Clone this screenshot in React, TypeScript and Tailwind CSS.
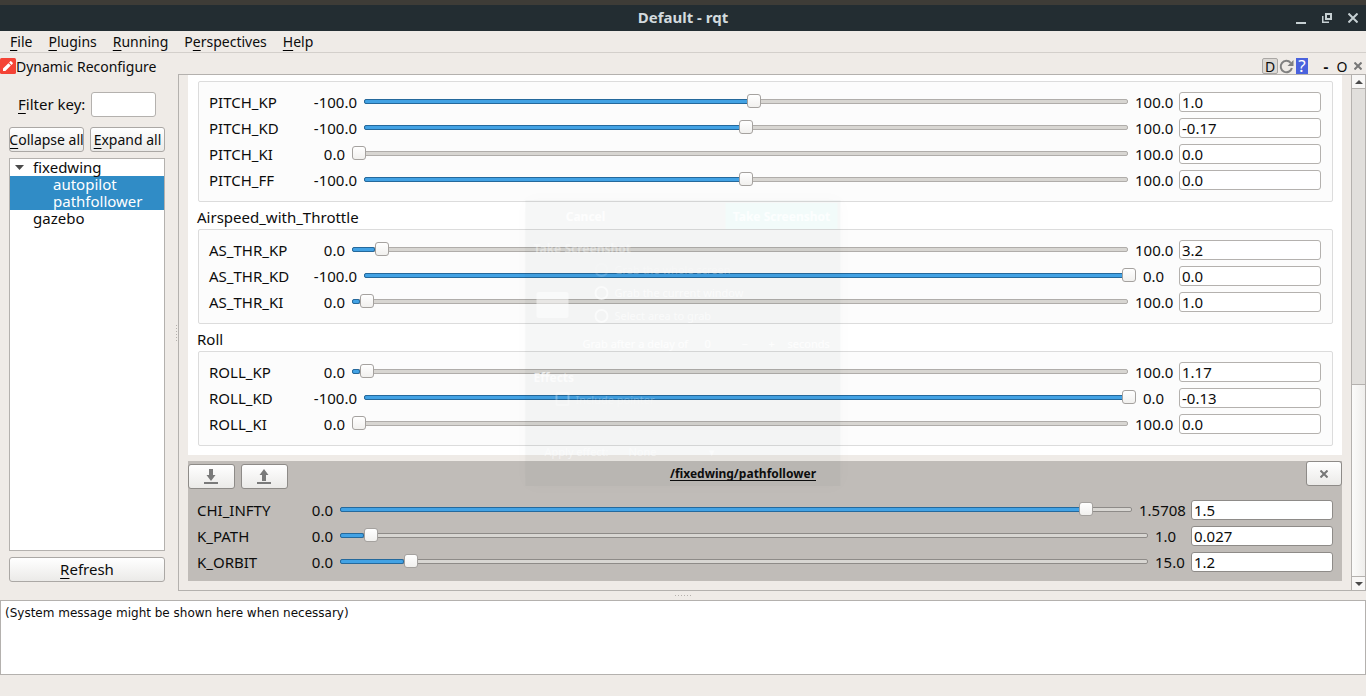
import React from "react";

type Param = { name: string; min: string; max: string; value: string; pos: number };

const pitch: Param[] = [
  { name: "PITCH_KP", min: "-100.0", max: "100.0", value: "1.0", pos: 51 },
  { name: "PITCH_KD", min: "-100.0", max: "100.0", value: "-0.17", pos: 50 },
  { name: "PITCH_KI", min: "0.0", max: "100.0", value: "0.0", pos: 0 },
  { name: "PITCH_FF", min: "-100.0", max: "100.0", value: "0.0", pos: 50 },
];
const airspeed: Param[] = [
  { name: "AS_THR_KP", min: "0.0", max: "100.0", value: "3.2", pos: 3 },
  { name: "AS_THR_KD", min: "-100.0", max: "0.0", value: "0.0", pos: 100 },
  { name: "AS_THR_KI", min: "0.0", max: "100.0", value: "1.0", pos: 1 },
];
const roll: Param[] = [
  { name: "ROLL_KP", min: "0.0", max: "100.0", value: "1.17", pos: 1 },
  { name: "ROLL_KD", min: "-100.0", max: "0.0", value: "-0.13", pos: 100 },
  { name: "ROLL_KI", min: "0.0", max: "100.0", value: "0.0", pos: 0 },
];
const follower: Param[] = [
  { name: "CHI_INFTY", min: "0.0", max: "1.5708", value: "1.5", pos: 95 },
  { name: "K_PATH", min: "0.0", max: "1.0", value: "0.027", pos: 3 },
  { name: "K_ORBIT", min: "0.0", max: "15.0", value: "1.2", pos: 8 },
];

function Slider({ label, pos, dark }: { label: string; pos: number; dark?: boolean }) {
  return (
    <div className="relative flex h-5 min-w-0 flex-1 items-center pb-px">
      <div
        className={
          "h-[5px] w-full rounded-[2px] border bg-[#d8d6d2] " +
          (dark ? "border-[#8e8b88]" : "border-[#b0adaa]")
        }
      >
        <div
          className="-mt-px -ml-px h-[5px] rounded-[2px] border border-[#25699c] bg-[#42a2e4]"
          style={{ width: pos + "%" }}
        />
      </div>
      <input
        type="range"
        aria-label={label + " slider"}
        min={0}
        max={100}
        step="any"
        defaultValue={pos}
        className="absolute inset-x-0 top-0 h-[18px] w-full appearance-none bg-transparent [&::-webkit-slider-thumb]:size-3.5 [&::-webkit-slider-thumb]:appearance-none [&::-webkit-slider-thumb]:rounded-[3px] [&::-webkit-slider-thumb]:border [&::-webkit-slider-thumb]:border-[#a5a29f] [&::-webkit-slider-thumb]:bg-linear-to-b [&::-webkit-slider-thumb]:from-white [&::-webkit-slider-thumb]:to-[#f1f0ee]"
      />
    </div>
  );
}

function ParamRow({ p, dark }: { p: Param; dark?: boolean }) {
  const minW = p.min.length > 4 ? "w-[42px]" : "w-[30px]";
  const maxW = p.max.length > 5 ? "w-[45px]" : p.max.length > 4 ? "w-[37px]" : "w-[29px]";
  return (
    <div className="flex h-5 items-center">
      <label htmlFor={p.name} className="w-[106px] shrink-0">
        {p.name}
      </label>
      <span className={"mr-[7px] flex shrink-0 justify-end whitespace-nowrap " + minW}>{p.min}</span>
      <Slider label={p.name} pos={p.pos} dark={dark} />
      <span className={"mr-[7px] ml-[7px] shrink-0 whitespace-nowrap " + maxW}>{p.max}</span>
      <input
        id={p.name}
        type="text"
        defaultValue={p.value}
        className={
          "h-5 w-[142px] shrink-0 rounded-[3px] border bg-white px-0.5 " +
          (dark ? "border-[#8e8b88]" : "border-[#b4b1ae]")
        }
      />
    </div>
  );
}

function Group({ params }: { params: Param[] }) {
  return (
    <div className="ml-px flex flex-col gap-1.5 rounded-[2px] border border-[#dcdcdc] bg-[#fcfcfc] pt-2.5 pr-[11px] pb-[11px] pl-[10px]">
      {params.map((p) => (
        <ParamRow key={p.name} p={p} />
      ))}
    </div>
  );
}

function Key({ children }: { children: React.ReactNode }) {
  return (
    <span className="underline decoration-black decoration-1 underline-offset-3 [text-decoration-skip-ink:none]">
      {children}
    </span>
  );
}

const buttonLook =
  "rounded-[3px] border border-[#aba8a5] bg-linear-to-b from-white to-[#ebeae8]";
const darkButtonLook =
  "rounded-[3px] border border-[#8e8b88] bg-linear-to-b from-white to-[#ebeae8]";

function FadingDialog() {
  return (
    <div
      aria-hidden="true"
      className="pointer-events-none absolute top-[200px] left-1/2 flex h-[286px] w-[315px] -translate-x-1/2 flex-col bg-[#203030]/4 font-['Noto_Sans',sans-serif] text-[11px] text-white/50 shadow-[0_0_16px_rgba(0,0,0,0.02)]"
    >
      <div className="flex h-8 items-center justify-between pr-[3px] pl-1 text-[12px] font-bold text-white/80">
        <button tabIndex={-1} className="h-[26px] w-[112px]">
          Cancel
        </button>
        <button tabIndex={-1} className="h-[26px] w-[112px] bg-[#f2fbfa]">
          Take Screenshot
        </button>
      </div>
      <div className="mt-2 ml-2 h-5 text-[12px] font-bold text-white/40">Take Screenshot</div>
      <div className="-mt-0.5 ml-[11px] flex h-[69px] items-center">
        <div className="mt-6 h-[26px] w-8 rounded-[2px] bg-white/50" />
        <div className="ml-[26px] flex flex-col">
          {["Grab the whole screen", "Grab the current window", "Select area to grab"].map((t, i) => (
            <label
              key={t}
              className={"flex h-[23px] items-center gap-1.5 " + (i === 0 ? "text-white/30" : "text-white/60")}
            >
              <input
                type="radio"
                tabIndex={-1}
                name="grab"
                className={
                  "size-3.5 appearance-none rounded-full border-2 " +
                  (i === 0 ? "border-white/15" : "border-white/60")
                }
              />
              {t}
            </label>
          ))}
        </div>
      </div>
      <div className="mt-1.5 ml-[57px] flex h-5 items-center text-white/80">
        <span className="w-[122px]">Grab after a delay of</span>
        <span className="w-[37px]">0</span>
        <span className="w-[27px]">−</span>
        <span className="w-[19px]">+</span>
        <span>seconds</span>
      </div>
      <div className="mt-4 ml-2 h-5 text-[12px] font-bold text-white/70">Effects</div>
      <label className="ml-[30px] flex h-5 items-center gap-1.5 text-white/25">
        <input
          type="checkbox"
          tabIndex={-1}
          className="size-3.5 appearance-none rounded-[2px] border-2 border-white/30"
        />
        Include pointer
      </label>
      <div className="mt-8 ml-[19px] flex h-5 items-center">
        <span className="w-[84px]">Apply effect:</span>
        <span className="w-[80px]">None</span>
        <span>▾</span>
      </div>
    </div>
  );
}

export default function App() {
  return (
    <div className="relative flex min-h-screen flex-col bg-[#efebe7] font-['Noto_Sans',sans-serif] text-[15px] leading-[17px] text-[#0c0c0c]">
      <div className="h-[5px] bg-[#3e3c37]" />
      <header className="flex h-[26px] items-center bg-[#232d32] pb-px text-[#d2dade]">
        <div className="w-20" />
        <h1 className="flex-1 text-center text-[15px] font-bold">Default - rqt</h1>
        <div className="flex w-20 items-center justify-end gap-4 pr-2">
          <button aria-label="Minimize" className="flex h-3 w-2.5 items-end">
            <span className="h-0.5 w-2.5 bg-[#c6d0d3]" />
          </button>
          <button aria-label="Restore">
            <svg width="10" height="10" viewBox="0 0 10 10" fill="none" stroke="#c6d0d3">
              <path d="M4 1h5v5H4z" strokeWidth="2" />
              <path d="M0.75 3v6.25H7" strokeWidth="1.5" />
            </svg>
          </button>
          <button aria-label="Close">
            <svg width="10" height="10" viewBox="0 0 10 10" stroke="#c6d0d3" strokeWidth="2">
              <path d="M0.5 0.5l9 9M9.5 0.5l-9 9" />
            </svg>
          </button>
        </div>
      </header>
      <nav className="flex h-[22px] items-center gap-4 border-b border-[#d3cfcb] pl-2.5 text-[14px] leading-[17px]">
        <button><Key>F</Key>ile</button>
        <button><Key>P</Key>lugins</button>
        <button><Key>R</Key>unning</button>
        <button>P<Key>e</Key>rspectives</button>
        <button><Key>H</Key>elp</button>
      </nav>
      <div className="flex h-[21px] items-center pt-[5px]">
        <svg width="16" height="16" viewBox="0 0 16 16">
          <rect width="16" height="16" rx="1.5" fill="#f44336" />
          <path
            fill="#fff"
            d="M3 10.6V13h2.4l5.4-5.4-2.4-2.4L3 10.6zM12.7 5.7a.7.7 0 0 0 0-.9l-1.5-1.5a.7.7 0 0 0-.9 0L9.1 4.5l2.4 2.4 1.2-1.2z"
          />
        </svg>
        <h2 className="flex-1 text-[14px]">Dynamic Reconfigure</h2>
        <button className="h-4 w-4 rounded-[2px] border border-[#aaa7a4] bg-[#dcd9d5] text-[14px] leading-4">D</button>
        <button aria-label="Reload" className="ml-px">
          <svg width="15" height="15" viewBox="0 0 15 15" fill="none">
            <path d="M11.7 3.8A5.7 5.7 0 1 0 12.9 9" stroke="#808080" strokeWidth="2" />
            <path d="M14.5 1v6h-6z" fill="#808080" />
          </svg>
        </button>
        <button className="ml-0.5 h-4 w-3 bg-[#4a62dd] text-[17px] leading-4 text-white">?</button>
        <button className="ml-[14px] w-2 font-bold">-</button>
        <button className="ml-1.5 w-3 text-[14px]">O</button>
        <button aria-label="Close dock" className="mr-1 ml-1.5">
          <svg width="8" height="8" viewBox="0 0 8 8" stroke="#777" strokeWidth="2">
            <path d="M0.5 0.5l7 7M7.5 0.5l-7 7" />
          </svg>
        </button>
      </div>

      <main className="flex">
        <aside className="flex w-[174px] shrink-0 flex-col px-[9px] pt-[18px] pb-[9px]">
          <div className="flex items-center pl-[9px]">
            <label htmlFor="filter" className="w-[73px] whitespace-nowrap"><Key>F</Key>ilter key:</label>
            <input id="filter" type="text" className="h-[25px] w-[65px] rounded-[3px] border border-[#b4b1ae] bg-white px-1" />
          </div>
          <div className="mt-2.5 flex gap-[6px] text-[14px] leading-[17px]">
            <button className={"flex h-[25px] w-[75px] items-center justify-center overflow-hidden whitespace-nowrap " + buttonLook}>
              <span><Key>C</Key>ollapse all</span>
            </button>
            <button className={"flex h-[25px] w-[75px] items-center justify-center overflow-hidden whitespace-nowrap " + buttonLook}>
              <span><Key>E</Key>xpand all</span>
            </button>
          </div>
          <ul className="mt-1.5 flex-1 border border-[#b4b1ae] bg-white">
            <li className="flex items-center">
              <svg width="9" height="5" viewBox="0 0 9 5" className="mr-[9px] ml-[5px]">
                <path d="M0 0h9L4.5 5z" fill="#4a4a4a" />
              </svg>
              fixedwing
            </li>
            <li className="bg-[#308cc6] pl-[43px] text-white">autopilot</li>
            <li className="bg-[#308cc6] pl-[43px] text-white">pathfollower</li>
            <li className="pl-[23px]">gazebo</li>
          </ul>
          <button className={"mt-1.5 h-[25px] " + buttonLook}><Key>R</Key>efresh</button>
        </aside>
        <div className="flex w-1 shrink-0 flex-col items-center justify-center gap-0.5">
          {[0, 1, 2, 3, 4, 5].map((i) => (
            <span key={i} className="size-px bg-[#b5b1ad]" />
          ))}
        </div>
        <div className="flex min-w-0 flex-1 border border-r-0 border-[#b4b1ae]">
          <div className="flex min-w-0 flex-1 flex-col gap-1.5 pr-[9px] pb-[9px] pl-[9px]">
            <section className="bg-white px-[9px] pt-1.5 pb-[9px]">
              <Group params={pitch} />
              <h3 className="flex h-[27px] items-center pt-1">Airspeed_with_Throttle</h3>
              <Group params={airspeed} />
              <h3 className="flex h-[27px] items-center pt-1">Roll</h3>
              <Group params={roll} />
            </section>
            <section className="bg-[#c0bcb8] pb-[9px]">
              <div className="flex h-[39px] items-start">
                <div className="flex w-[100px] shrink-0 gap-1.5 pt-[3px]">
                  <button aria-label="Load parameters" className={"flex h-[25px] w-[47px] items-center justify-center pr-0.5 " + darkButtonLook}>
                    <svg width="14" height="15" viewBox="0 0 14 15" fill="#7a7a7a">
                      <path d="M5 0h4v6h2.5L7 12 2.5 6H5zM0 13h14v2H0z" />
                    </svg>
                  </button>
                  <button aria-label="Save parameters" className={"flex h-[25px] w-[47px] items-center justify-center pr-0.5 " + darkButtonLook}>
                    <svg width="14" height="15" viewBox="0 0 14 15" fill="#7a7a7a">
                      <path d="M5 12h4V6h2.5L7 0 2.5 6H5zM0 13h14v2H0z" />
                    </svg>
                  </button>
                </div>
                <h3 className="flex-1 pt-1 pr-[108px] text-center text-[12px] font-bold underline underline-offset-2 [text-decoration-skip-ink:none]">
                  /fixedwing/pathfollower
                </h3>
                <button aria-label="Close node" className={"flex h-[25px] w-9 items-center justify-center " + darkButtonLook}>
                  <svg width="8" height="8" viewBox="0 0 8 8" stroke="#777" strokeWidth="2">
                    <path d="M0.5 0.5l7 7M7.5 0.5l-7 7" />
                  </svg>
                </button>
              </div>
              <div className="flex flex-col gap-1.5 px-[9px]">
                {follower.map((p) => (
                  <ParamRow key={p.name} p={p} dark />
                ))}
              </div>
            </section>
          </div>
          <div className="flex w-[15px] shrink-0 flex-col border-x border-[#b4b1ae] bg-[#e1dfdc]">
            <button aria-label="Scroll up" className="flex h-3.5 items-center justify-center border-b border-[#b4b1ae] bg-[#f8f7f6]">
              <svg width="8" height="4" viewBox="0 0 8 4"><path d="M0 4h8L4 0z" fill="#4a4a4a" /></svg>
            </button>
            <div className="flex-1" />
            <div className="h-[192px] border-t border-[#b4b1ae] bg-linear-to-r from-[#fbfbfa] to-[#efeeec]" />
            <button aria-label="Scroll down" className="flex h-3.5 items-center justify-center border-t border-[#b4b1ae] bg-[#f8f7f6]">
              <svg width="8" height="4" viewBox="0 0 8 4"><path d="M0 0h8L4 4z" fill="#4a4a4a" /></svg>
            </button>
          </div>
        </div>
      </main>
      <div className="flex h-[9px] items-center justify-center gap-0.5">
        {[0, 1, 2, 3, 4, 5].map((i) => (
          <span key={i} className="size-px bg-[#b5b1ad]" />
        ))}
      </div>
      <textarea
        aria-label="System messages"
        readOnly
        defaultValue="(System message might be shown here when necessary)"
        className="block h-[75px] w-full resize-none border border-[#b4b1ae] bg-white px-1 py-[5px] font-['DejaVu_Sans',sans-serif] text-[12px] leading-[15px]"
      />
      <FadingDialog />
    </div>
  );
}
